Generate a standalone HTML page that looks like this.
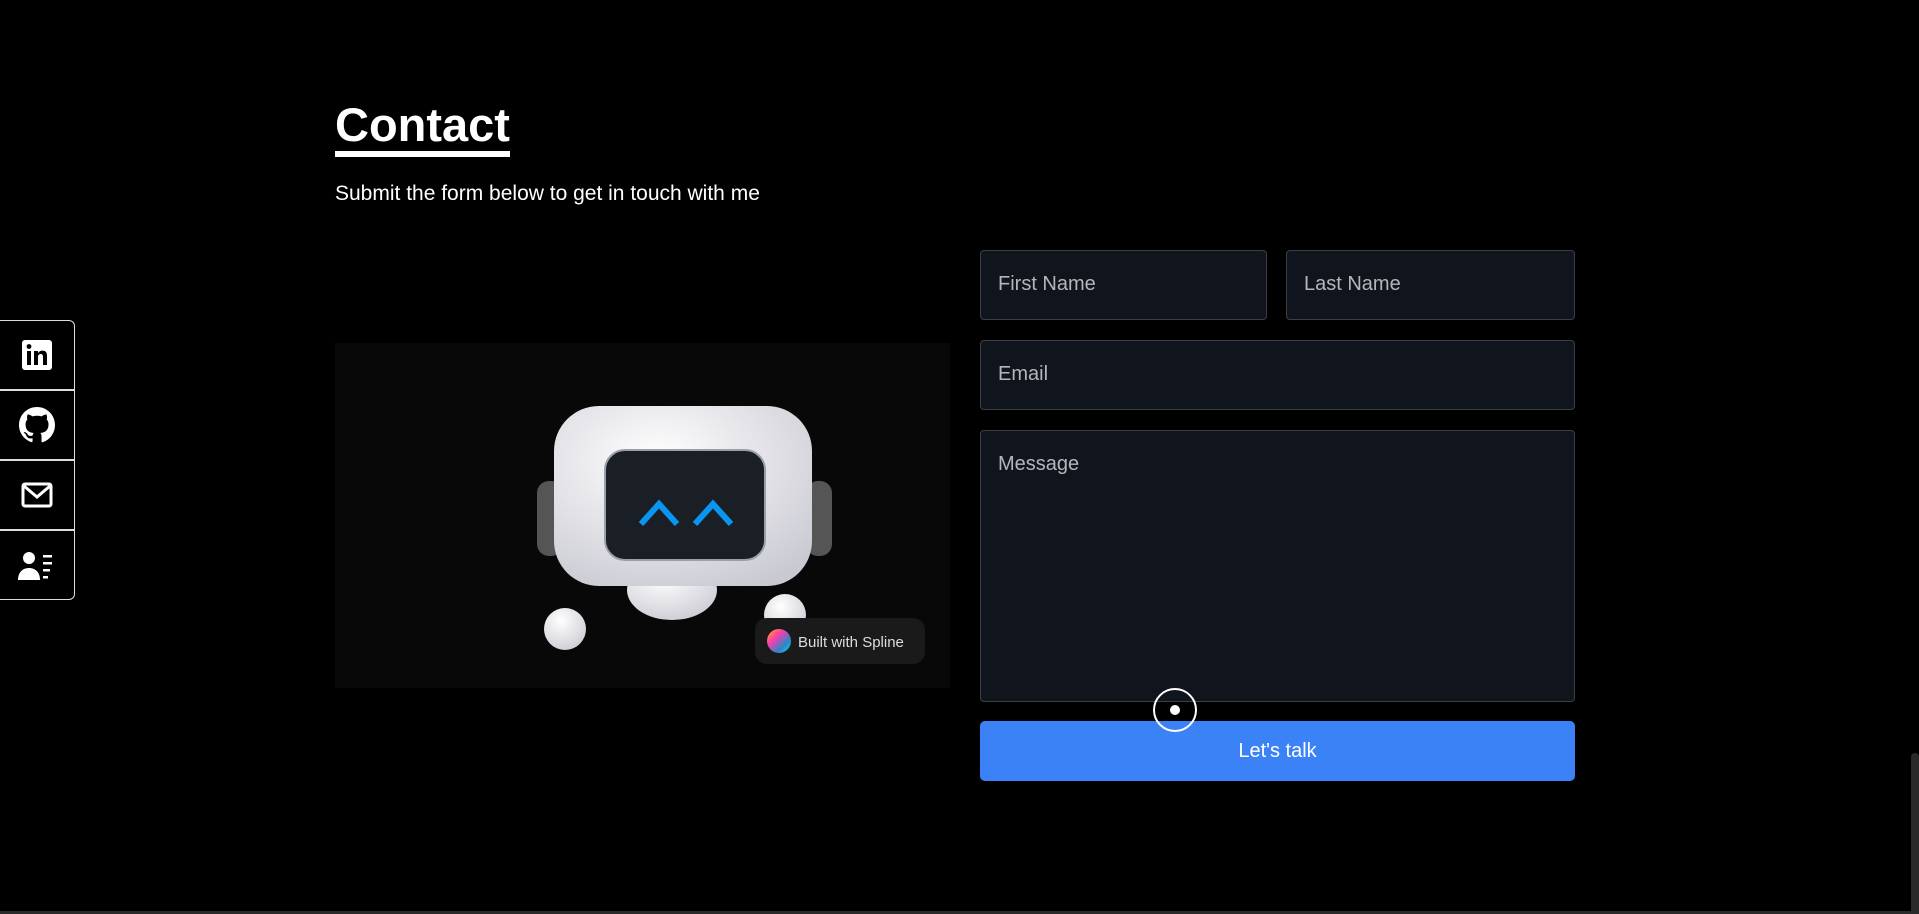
<!DOCTYPE html>
<html><head><meta charset="utf-8"><style>
*{box-sizing:border-box;margin:0;padding:0}
body{width:1919px;height:914px;background:#000;overflow:hidden;position:relative;font-family:"Liberation Sans",sans-serif;color:#fff}
h1{position:absolute;left:335px;top:97px;font-size:47px;font-weight:700;letter-spacing:0;line-height:56px}
.ul{position:absolute;left:335px;top:151px;width:175px;height:6px;background:#fff}
.sub{position:absolute;left:335px;top:182px;font-size:21px}
.panel{position:absolute;left:335px;top:343px;width:615px;height:345px;background:#080808;overflow:hidden}
.f{position:absolute;background:#10151d;border:1px solid #3a3f46;border-radius:4px;color:#b4b6b9;font-size:20px;padding:22px 0 0 17px}
.btn{position:absolute;left:980px;top:721px;width:595px;height:60px;background:#3b82f6;border-radius:5px;font-size:20px;text-align:center;line-height:60px}
.side{position:absolute;left:-2px;top:320px;width:77px;height:280px;border:1px solid #ddd;border-radius:0 6px 6px 0}
.side div{height:70px;border-bottom:2px solid #ddd;display:flex;align-items:center;justify-content:center}
.side div:last-child{border-bottom:none}
.sb{position:absolute;right:0;top:753px;width:8px;height:161px;background:#2a2a2a;border-radius:4px}
</style></head><body>
<h1>Contact</h1><div class="ul"></div>
<div class="sub">Submit the form below to get in touch with me</div>
<div class="side">
<div><svg width="32" height="32" viewBox="0 0 32 32"><rect x="1" y="1" width="30" height="30" rx="3" fill="#fff"/><rect x="6" y="12" width="4" height="14" fill="#000"/><circle cx="8" cy="7.5" r="2.4" fill="#000"/><path d="M13 12h4v2c1-1.6 2.6-2.4 4.5-2.4 3.5 0 4.5 2.2 4.5 5.5V26h-4v-8c0-1.8-.6-3-2.3-3-1.8 0-2.7 1.2-2.7 3v8h-4z" fill="#000"/></svg></div>
<div><svg width="36" height="36" viewBox="0 0 16 16"><path fill="#fff" d="M8 0C3.58 0 0 3.58 0 8c0 3.54 2.29 6.53 5.47 7.590.4.07.55-.17.55-.38v-1.33c-2.23.48-2.7-1.070-2.7-1.070-.36-.92-.89-1.17-.89-1.17-.73-.5.06-.49.06-.49.8.06 1.23.83 1.23.83.72 1.23 1.88.87 2.34.67.07-.52.28-.87.51-1.07-1.78-.2-3.65-.89-3.65-3.95 0-.87.31-1.59.82-2.15-.08-.2-.36-1.02.08-2.12 0 0 .67-.21 2.2.82a7.600 7.600 0 0 1 4 0c1.53-1.04 2.2-.82 2.2-.82.44 1.1.16 1.92.08 2.12.51.56.82 1.27.82 2.15 0 3.07-1.87 3.75-3.65 3.95.29.25.54.73.54 1.48v2.2c0 .21.15.46.55.38A8 8 0 0 0 16 8c0-4.42-3.58-8-8-8z"/></svg></div>
<div><svg width="32" height="28" viewBox="0 0 32 28"><rect x="2" y="3" width="28" height="22" rx="2" fill="none" stroke="#fff" stroke-width="3"/><path d="M3 5l13 11 13-11" fill="none" stroke="#fff" stroke-width="3"/></svg></div>
<div><svg width="38" height="32" viewBox="0 0 38 32"><circle cx="11" cy="8" r="6" fill="#fff"/><path d="M0 30c0-8 5-12 11-12s11 4 11 12z" fill="#fff"/><rect x="25" y="5" width="9" height="2.5" fill="#fff"/><rect x="25" y="12" width="9" height="2.5" fill="#fff"/><rect x="25" y="19" width="7" height="2.5" fill="#fff"/><rect x="25" y="26" width="5" height="2.5" fill="#fff"/></svg></div>
</div>
<div class="panel">
<svg width="615" height="345" viewBox="0 0 615 345">
<defs><radialGradient id="w" cx="40%" cy="30%" r="80%"><stop offset="0" stop-color="#fff"/><stop offset="1" stop-color="#c9c9d2"/></radialGradient>
<linearGradient id="sp" x1="0" y1="0" x2="1" y2="1"><stop offset="0" stop-color="#ffb800"/><stop offset=".35" stop-color="#ff3cac"/><stop offset=".7" stop-color="#2b86c5"/><stop offset="1" stop-color="#00e0ff"/></linearGradient></defs>
<rect x="202" y="138" width="26" height="75" rx="12" fill="#555"/>
<rect x="471" y="138" width="26" height="75" rx="12" fill="#555"/>
<ellipse cx="337" cy="247" rx="45" ry="30" fill="url(#w)"/>
<rect x="219" y="63" width="258" height="180" rx="45" fill="url(#w)"/>
<rect x="270" y="107" width="160" height="110" rx="20" fill="#1a1f26" stroke="#9aa0aa" stroke-width="2"/>
<path d="M306 181l18-20 18 20M360 181l18-20 18 20" fill="none" stroke="#0a95f0" stroke-width="6"/>
<circle cx="230" cy="286" r="21" fill="url(#w)"/>
<circle cx="450" cy="272" r="21" fill="url(#w)"/>
<rect x="420" y="275" width="170" height="46" rx="12" fill="#1a1a1a"/>
<circle cx="444" cy="298" r="12" fill="url(#sp)"/>
<text x="463" y="304" font-family="Liberation Sans" font-size="15" fill="#ddd">Built with Spline</text>
</svg></div>
<div class="f" style="left:980px;top:250px;width:287px;height:70px">First Name</div>
<div class="f" style="left:1286px;top:250px;width:289px;height:70px">Last Name</div>
<div class="f" style="left:980px;top:340px;width:595px;height:70px">Email</div>
<div class="f" style="left:980px;top:430px;width:595px;height:272px">Message</div>
<div class="btn">Let's talk</div>
<div style="position:absolute;left:1153px;top:688px;width:44px;height:44px;border:2px solid #fff;border-radius:50%"></div>
<div style="position:absolute;left:1170px;top:705px;width:10px;height:10px;background:#fff;border-radius:50%"></div>
<div class="sb"></div>
<div style="position:absolute;left:0;top:911px;width:1919px;height:3px;background:#2a2a2a"></div>
</body></html>
